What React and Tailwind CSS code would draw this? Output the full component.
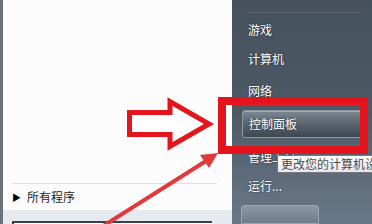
import React from "react";

const font = { fontFamily: '"Noto Sans CJK SC", "Noto Sans", sans-serif' };

function Item({ children, className = "" }) {
  return (
    <div
      className={"flex items-center pl-[16px] text-[12px] text-white [text-shadow:0_0_2px_rgba(0,0,0,0.6)] " + className}
    >
      {children}
    </div>
  );
}

export default function App() {
  return (
    <div className="relative flex h-[224px] w-[372px] overflow-hidden bg-white" style={font}>
      {/* Left pane */}
      <div className="flex h-full w-[232px] flex-col border-l-[3px] border-[#68717c] bg-[#fcfcfc]">
        <div className="h-[183px]" />
        <div className="ml-[9px] mr-[15px] h-px bg-[#dde2e8]" />
        <div className="flex h-[26px] items-center pl-[9px] text-[12px] text-[#1e1e1e]">
          <span className="mr-[6px] text-[9px] leading-none text-black">▶</span>
          所有程序
        </div>
        <div className="flex-1 bg-[#e6e9ee] pl-[9px] pt-[11px]">
          <div className="h-full w-[200px] border-t-[2px] border-l-[2px] border-[#3b4148] bg-white" />
        </div>
      </div>

      {/* Right pane */}
      <div className="flex h-full flex-1 flex-col bg-gradient-to-b from-[#46515c] via-[#4d5966] to-[#6a798a]">
        <div className="h-[12px]" />
        <div className="ml-[16px] mr-[12px] h-px bg-[#5d6873]" />
        <Item className="mt-[3px] h-[30px]">游戏</Item>
        <Item className="h-[31px]">计算机</Item>
        <Item className="h-[30px] pt-[5px]">网络</Item>
        <div className="ml-[10px] mr-[7px] mt-[7px] flex h-[29px] items-center rounded-[3px] border border-[#8e98a2] bg-gradient-to-b from-[#7d8893] via-[#5a6570] to-[#3f4852] pl-[6px] text-[12px] text-white shadow-[inset_0_1px_0_rgba(255,255,255,0.3)] [text-shadow:0_0_2px_rgba(0,0,0,0.6)]">
          控制面板
        </div>
        <Item className="mt-[5px] h-[30px]">管理工具</Item>
        <Item className="h-[30px]">运行...</Item>
        <div className="ml-[9px] mt-[4px] h-[20px] w-[78px] rounded-t-[3px] border border-[#9aa5b0] bg-gradient-to-b from-[#8a97a5] to-[#6f7d8c]" />
      </div>

      {/* Tooltip */}
      <div className="absolute left-[277px] top-[155px] flex h-[18px] w-[100px] items-center border border-[#767676] bg-gradient-to-b from-white to-[#e4e5f0] pl-[3px] text-[12px] leading-none text-[#4c4c4c] whitespace-nowrap">
        更改您的计算机设置
      </div>

      {/* Red highlight box */}
      <div className="absolute left-[218px] top-[97px] h-[57px] w-[150px] border-[8px] border-[#e5141c]" />

      {/* Arrows */}
      <svg className="absolute left-0 top-0" width="372" height="224" viewBox="0 0 372 224">
        <polygon
          points="129.5,112.5 170,112.5 170,101.5 209,124 170,146.5 170,134.5 129.5,134.5"
          fill="white"
          stroke="#e3151d"
          strokeWidth="5"
          strokeLinejoin="miter"
        />
        <line x1="100" y1="228" x2="206" y2="161" stroke="#e23a3c" strokeWidth="4" />
        <polygon points="218,153 209,168 200,155" fill="#e23a3c" />
      </svg>
    </div>
  );
}
